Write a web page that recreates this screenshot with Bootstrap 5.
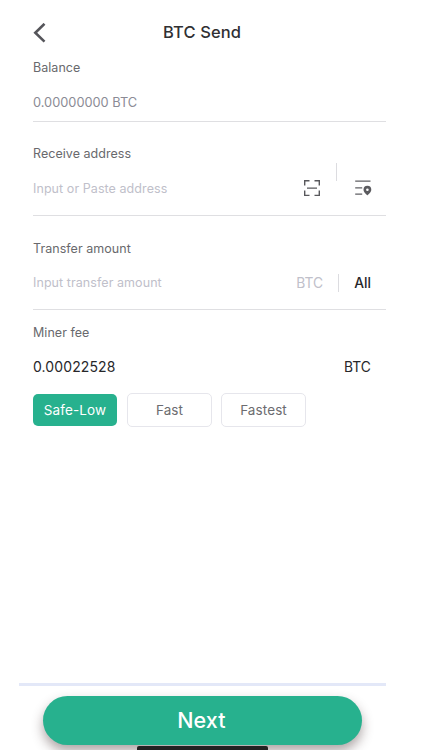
<!DOCTYPE html>
<html lang="en">
<head>
<meta charset="utf-8">
<meta name="viewport" content="width=device-width, initial-scale=1">
<title>BTC Send</title>
<link href="https://cdn.jsdelivr.net/npm/bootstrap@5.3.0/dist/css/bootstrap.min.css" rel="stylesheet">
<style>
body{font-family:Inter,"Liberation Sans",sans-serif;font-size:13px;line-height:20px;color:#27272a;background:#fff}
.screen{height:750px}
.sheet{margin-left:33px;width:353px}
.topbar{height:58px;padding-top:8px}
.topbar h1{font-size:16.5px;font-weight:500;letter-spacing:.12px;color:#303033;margin-left:117px}
.field{border-bottom:1px solid #dfdfe2}
.field-balance{height:64px}
.field-address,.field-amount{height:94px;padding-top:22px}
.field-amount{padding-top:23px}
.label{font-size:12.5px;color:#69696d;letter-spacing:.04px}
.entry{height:20px;margin-top:15px}
.hint{color:#c0c0ca;font-size:12.5px;letter-spacing:.07px}
.field-amount .entry{margin-top:14px}
.field-balance .entry{font-size:12.8px}
.field-address .entry{margin-top:15px}
.balance{color:#8b8b95}
.divider{width:1px;height:18px;background:#dcdce0}
.raised{margin:-34px 17px 0 15px}
.address-book{margin-right:14px}
.fee-pad{padding-top:13px}
.fee{font-size:14px;letter-spacing:.1px;padding-right:15px;margin-top:14px}
.fee span:last-child{font-size:13.8px}
.unit{font-size:13.8px}
.amount-divider{margin:0 15px}
.all{font-size:13.8px;margin-right:15px;letter-spacing:0}
.gap-speeds{gap:9px}
.speed{width:85px;height:34px;font-size:13.5px;line-height:30px;letter-spacing:.1px;border-radius:5px;border:1px solid #e6e6ec;color:#6c6c70;padding:0 0 1px}
.speed.chosen{background:#27b18e;border-color:transparent;color:#fff;width:86px;margin-left:-1px;background-clip:padding-box;border-radius:6px}
.dock{height:67px}
.rule{height:3px;margin-left:19px;width:367px;background:#e3e8f8}
.next{width:319px;height:49px;margin:10px 0 0 43px;background:#27b18e;color:#fff;font-size:21.5px;font-weight:500;letter-spacing:.1px;padding-right:2px!important;box-shadow:0 6px 12px rgba(60,40,40,.42)}
.home{left:137px;bottom:0;width:131px;height:4px;background:#222;border-radius:2px 2px 0 0}
</style>
<script src="https://cdn.jsdelivr.net/npm/bootstrap@5.3.0/dist/js/bootstrap.bundle.min.js"></script>
</head>
<body>
<div class="screen d-flex flex-column position-relative overflow-hidden">
  <main class="sheet flex-grow-1">
    <header class="topbar d-flex align-items-center">
      <svg width="13" height="20" viewBox="0 0 13 20" fill="none" stroke="#55555a" stroke-width="2.6"><path d="M11.5.8 2.3 9.7l9.2 8.9"/></svg>
      <h1 class="mb-0">BTC Send</h1>
    </header>
    <section class="field field-balance">
      <div class="label">Balance</div>
      <div class="entry balance"><span>0.00000000 BTC</span></div>
    </section>
    <section class="field field-address">
      <div class="label">Receive address</div>
      <div class="entry d-flex align-items-center">
        <span class="hint flex-grow-1">Input or Paste address</span>
        <svg width="18" height="18" viewBox="0 0 18 18" fill="none" stroke="#58585c" stroke-width="1.4"><path d="M1.7 5.6V.8h4.8M11.5.8h4.8v4.8M16.3 10.6v4.8h-4.8M6.5 15.4H1.7v-4.8M4 8.1h10"/></svg>
        <span class="divider raised"></span>
        <svg class="address-book" width="18" height="18" viewBox="0 0 18 18"><path d="M1.2 1.2h15.3M1.2 7.9h7M1.2 14.2h7" fill="none" stroke="#606064" stroke-width="1.3"/><path d="M13.4 5.8a3.9 3.9 0 0 0-3.9 3.9c0 2.6 3.9 5.6 3.9 5.6s3.9-3 3.9-5.6a3.9 3.9 0 0 0-3.9-3.9zm0 2.6a1.3 1.3 0 1 1 0 2.6 1.3 1.3 0 0 1 0-2.6z" fill="#5b5b5f" fill-rule="evenodd"/></svg>
      </div>
    </section>
    <section class="field field-amount">
      <div class="label">Transfer amount</div>
      <div class="entry d-flex align-items-center">
        <span class="hint flex-grow-1">Input transfer amount</span>
        <span class="unit hint">BTC</span>
        <span class="divider amount-divider"></span>
        <span class="all fw-medium">All</span>
      </div>
    </section>
    <section class="fee-pad">
      <div class="label">Miner fee</div>
      <div class="entry fee d-flex justify-content-between"><span>0.00022528</span><span>BTC</span></div>
      <div class="gap-speeds d-flex mt-3">
        <button type="button" class="btn speed chosen">Safe-Low</button>
        <button type="button" class="btn speed">Fast</button>
        <button type="button" class="btn speed">Fastest</button>
      </div>
    </section>
  </main>
  <footer class="dock">
    <div class="rule"></div>
    <button type="button" class="btn next rounded-pill border-0 p-0">Next</button>
  </footer>
  <div class="home position-absolute"></div>
</div>
</body>
</html>
